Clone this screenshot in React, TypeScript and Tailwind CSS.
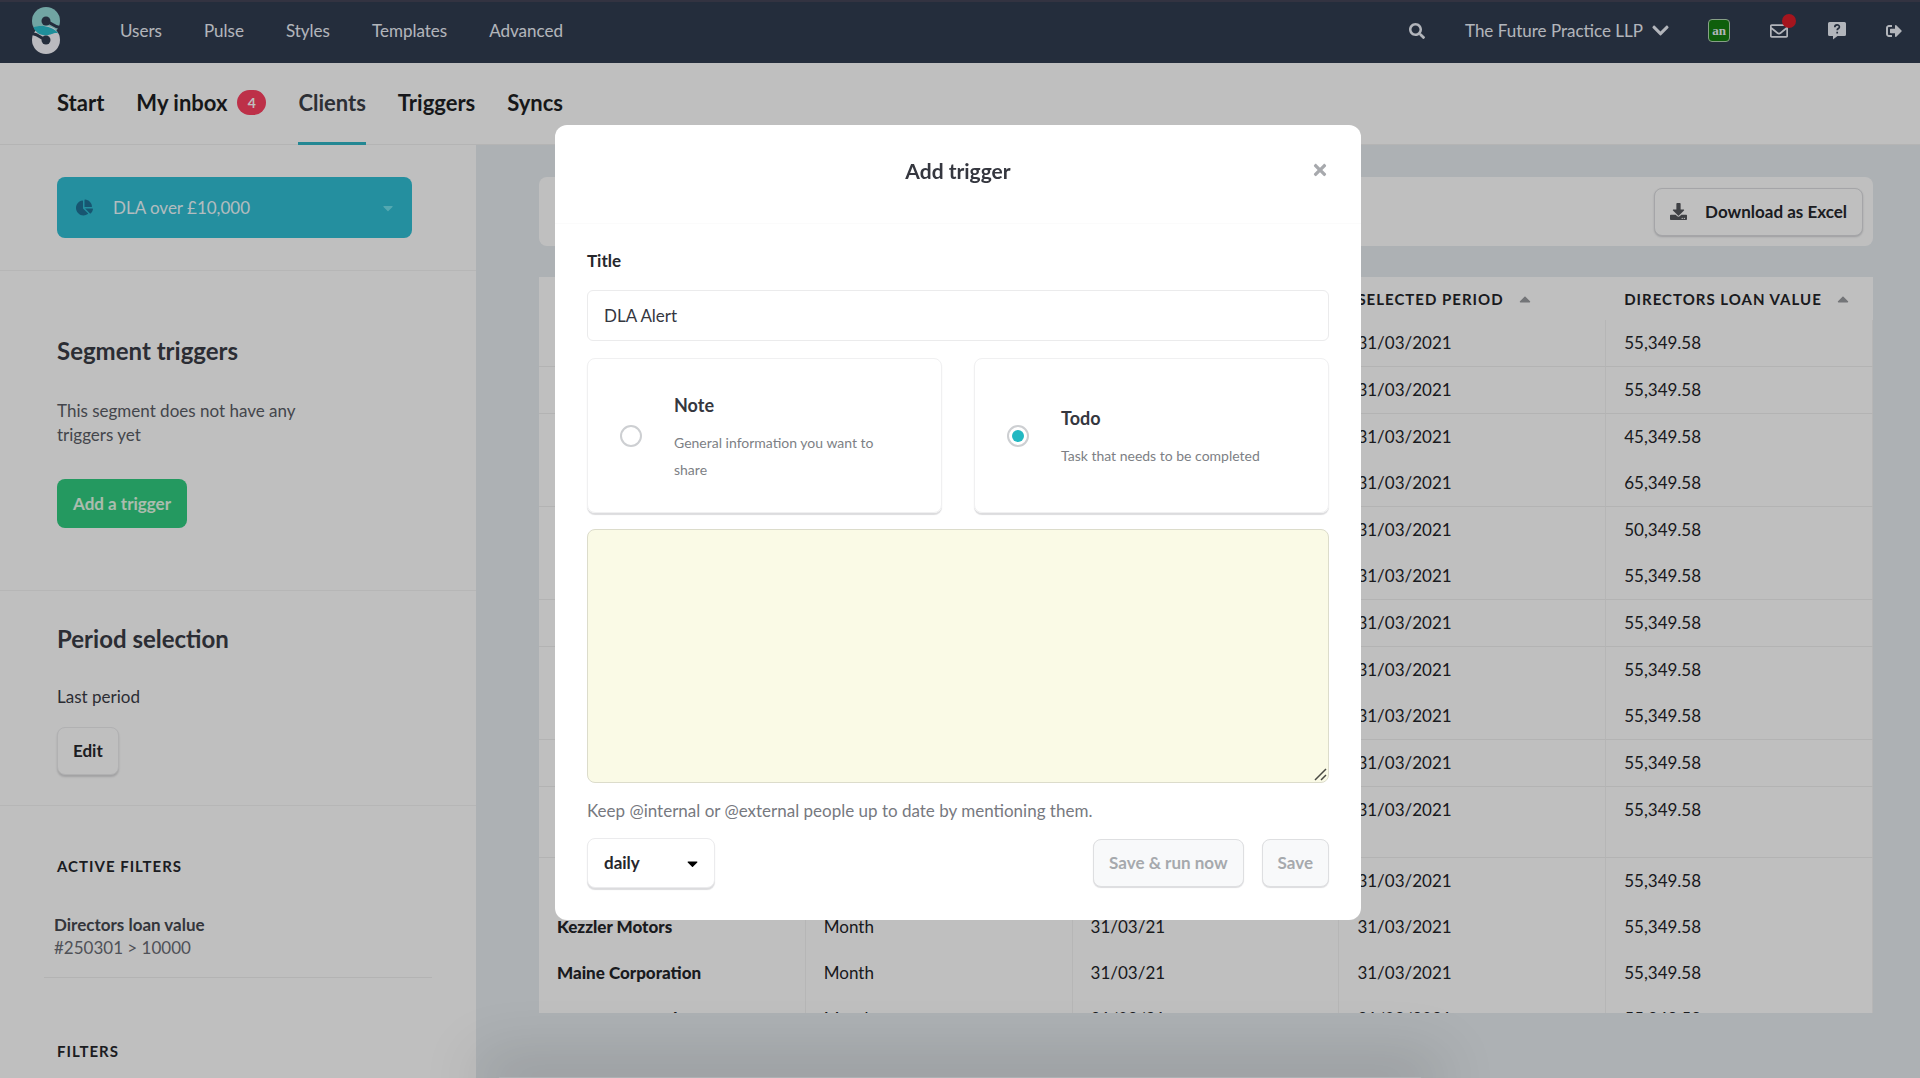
import { FaCaretDown, FaCaretUp, FaChartPie, FaChevronDown, FaDownload, FaRegEnvelope, FaSearch, FaSignOutAlt, FaTimes } from 'react-icons/fa';

const mainNav = ['Users', 'Pulse', 'Styles', 'Templates', 'Advanced'];

type Row = { name?: string; period?: string; date?: string; value: string; line?: boolean; tall?: boolean };

const rows: Row[] = [
  { value: '55,349.58', line: true },
  { value: '55,349.58', line: true },
  { value: '45,349.58' },
  { value: '65,349.58', line: true },
  { value: '50,349.58' },
  { value: '55,349.58', line: true },
  { value: '55,349.58', line: true },
  { value: '55,349.58' },
  { value: '55,349.58', line: true },
  { value: '55,349.58', line: true },
  { value: '55,349.58', line: true, tall: true },
  { value: '55,349.58' },
  { name: 'Kezzler Motors', period: 'Month', date: '31/03/21', value: '55,349.58' },
  { name: 'Maine Corporation', period: 'Month', date: '31/03/21', value: '55,349.58' },
  { name: 'Mercer Fernand', period: 'Month', date: '31/03/21', value: '55,349.58' },
];

const Logo = () => (
  <svg width="28" height="47" viewBox="0 0 28 47" aria-hidden="true">
    <circle cx="14" cy="14" r="14" fill="#97dcda" />
    <circle cx="14" cy="33" r="14" fill="#f8f8ff" />
    <path d="M1.500 20.500C7 18 20 18 26.500 26.500C22 25 20 28 14 28.500C8 28 4 26 1.500 20.500Z" fill="#2abfcf" />
    <path d="M14 14.500C19 15 20 19.500 28.500 20.500M14 32.500C9 32 8 27.500 -.5 26.500" fill="none" stroke="#313c50" strokeWidth="3" />
    <circle cx="14" cy="14" r="4.500" fill="#313c50" />
    <circle cx="14" cy="33" r="4.500" fill="#313c50" />
  </svg>
);

const HelpIcon = () => (
  <svg width="18" height="18" viewBox="0 0 18 18" aria-hidden="true">
    <path d="M1.500 0h15A1.500 1.500 0 0 1 18 1.500v11a1.500 1.500 0 0 1-1.500 1.500H9.500L5 17.500V14H1.500A1.500 1.500 0 0 1 0 12.500v-11A1.500 1.500 0 0 1 1.500 0Z" fill="currentColor" />
    <path d="M6.800 5.200c0-3 4.600-3 4.600-.3 0 1.700-2.200 1.600-2.200 3.300M9.200 9.800v1.700" fill="none" stroke="#313c50" strokeWidth="1.700" />
  </svg>
);

const Header = () => (
  <header className="flex h-[63px] shrink-0 items-center justify-between border-t-2 border-[#454457] bg-[#313c50] pr-[18px] pb-1 pl-8 text-[17px] text-[#eef2fa] shadow-md">
    <div className="flex items-center gap-[60px]">
      <a href="#" aria-label="Home">
        <Logo />
      </a>
      <nav className="flex items-center gap-[42px]">
        {mainNav.map((item) => (
          <a key={item} href="#">{item}</a>
        ))}
      </nav>
    </div>

    <div className="flex items-center">
      <button aria-label="Search" className="mr-10">
        <FaSearch size={16} />
      </button>
      <button className="mr-[38px] flex items-center gap-2">
        The Future Practice LLP
        <FaChevronDown size={19} />
      </button>
      <a href="#" className="mr-10 flex h-[23px] w-[22px] items-center justify-center rounded-sm border border-[#b5d5b5] bg-[#157f10] font-['Liberation_Serif',serif] text-[13px] font-bold">an</a>
      <a href="#" aria-label="Messages" className="relative mr-10">
        <FaRegEnvelope size={18} />
        <span className="absolute -top-2 -right-2 size-3.5 rounded-full bg-[#dd1c28]" />
      </a>
      <a href="#" aria-label="Help" className="mr-10">
        <HelpIcon />
      </a>
      <a href="#" aria-label="Sign out">
        <FaSignOutAlt size={16} />
      </a>
    </div>
  </header>
);

const SubNav = () => (
  <nav className="flex h-[82px] shrink-0 gap-8 border-b border-[#f0f0f0] bg-white pl-[57px] text-[22px] font-bold text-[#1e1f24]">
    <a href="#" className="flex items-center pb-0.5">Start</a>
    <a href="#" className="flex items-center gap-2.5 pb-0.5">
      My inbox
      <span className="flex h-[25px] w-[29px] items-center justify-center rounded-full bg-[#fc4061] text-sm text-white">4</span>
    </a>
    <a href="#" className="relative flex items-center pb-0.5 text-[#3c3f47]">
      Clients
      <span className="absolute inset-x-0 -bottom-px h-[3px] bg-[#2fb4c4]" />
    </a>
    <a href="#" className="flex items-center pb-0.5">Triggers</a>
    <a href="#" className="flex items-center pb-0.5">Syncs</a>
  </nav>
);

const Sidebar = () => (
  <aside className="w-[476px] shrink-0 overflow-hidden bg-white text-[17px] leading-6">
    <section className="border-b border-[#f3f3f3] px-[57px] py-8">
      <button className="flex h-[61px] w-[355px] items-center rounded-lg bg-[#30bfd4] px-4 pl-[19px] text-[#eefbff]">
        <FaChartPie size={17} className="mr-5 text-[#1f7397]" />
        DLA over £10,000
        <FaCaretDown size={16} className="ml-auto text-[#6fe0ec]" />
      </button>
    </section>

    <section className="border-b border-[#f3f3f3] px-[57px] pt-[66px] pb-[62px]">
      <h2 className="text-2xl leading-7 font-bold text-[#3a3c46]">Segment triggers</h2>
      <p className="mt-[34px] w-[260px] text-[#5a5d66]">This segment does not have any triggers yet</p>
      <button className="mt-8 h-[49px] rounded-lg bg-[#30cd80] px-4 font-bold text-[#e4fbe8]">Add a trigger</button>
    </section>

    <section className="border-b border-[#f3f3f3] px-[57px] pt-[34px] pb-[30px]">
      <h2 className="text-2xl leading-7 font-bold text-[#3a3c46]">Period selection</h2>
      <p className="mt-8 text-[#3a3c46]">Last period</p>
      <button className="mt-[18px] h-12 rounded-lg border border-[#ececee] bg-white px-[15px] font-bold text-[#26272c] shadow-[0_2px_2px_#d8d8da]">Edit</button>
    </section>

    <section className="pt-12 pl-[57px]">
      <h3 className="text-[15px] font-bold tracking-[1px] text-[#26272c] uppercase">Active filters</h3>
      <div className="mt-[35px] mr-11 -ml-[13px] border-b border-[#efefef] pb-[18px] pl-[10px] leading-[23px]">
        <p className="font-bold text-[#46484f]">Directors loan value</p>
        <p className="text-[#6a6c74]">#250301 &gt; 10000</p>
      </div>
      <h3 className="mt-[61px] text-[15px] font-bold tracking-[1px] text-[#26272c] uppercase">Filters</h3>
    </section>
  </aside>
);

const SortHeader = ({ label }: { label: string }) => (
  <th className="h-[43px] px-[18px] text-left">
    <button className="flex items-center gap-3 text-[15px] font-bold tracking-[1px] whitespace-nowrap uppercase">
      {label}
      <FaCaretUp size={18} className="text-[#9a9ca0]" />
    </button>
  </th>
);

const ClientTable = () => (
  <div className="mt-[31px] min-h-0 flex-1 overflow-hidden bg-white">
    <table className="w-full table-fixed border-separate border-spacing-0 text-[17px] leading-6 text-[#232429]">
      <thead>
        <tr>
          <th />
          <th />
          <th />
          <SortHeader label="Selected period" />
          <SortHeader label="Directors loan value" />
        </tr>
      </thead>
      <tbody>
        {rows.map((row, i) => {
          const cell = `px-[18px] pt-[11px] align-top border-r border-r-[#f3f3f3] ${row.tall ? 'pb-[35px]' : 'pb-[11px]'} ${row.line ? 'border-b border-b-[#efefef]' : ''}`;
          return (
            <tr key={i}>
              <td className={`${cell} font-black`}>{row.name}</td>
              <td className={cell}>{row.period}</td>
              <td className={cell}>{row.date}</td>
              <td className={cell}>31/03/2021</td>
              <td className={cell}>{row.value}</td>
            </tr>
          );
        })}
      </tbody>
    </table>
  </div>
);

const TypeCard = ({ id, title, text, checked }: { id: string; title: string; text: string; checked?: boolean }) => (
  <label htmlFor={id} className="flex h-[155px] flex-1 items-center rounded-lg border border-[#f0f0f1] px-8 shadow-[0_2px_1px_#dcdcde]">
    <input
      id={id}
      type="radio"
      name="type"
      defaultChecked={checked}
      className="size-[22px] shrink-0 appearance-none rounded-full border-2 border-[#cdcfd2] bg-white p-[3px] checked:bg-[#22b8c2] checked:bg-clip-content"
    />
    <span className="ml-8 pt-1">
      <span className="block text-lg leading-6 font-bold text-[#35373f]">{title}</span>
      <span className="mt-3 block text-sm leading-[27px] text-[#7d7f85]">{text}</span>
    </span>
  </label>
);

const Modal = () => (
  <div className="fixed inset-0 flex items-start justify-center bg-black/25 pt-[125px] pr-1">
    <div role="dialog" aria-labelledby="modal-title" className="w-[806px] rounded-xl bg-white text-[17px] leading-6">
      <div className="relative border-b border-[#fbfbfb] pt-8 pb-[38px]">
        <h1 id="modal-title" className="text-center text-[21px] leading-7 font-bold text-[#35373f]">Add trigger</h1>
        <button aria-label="Close" className="absolute top-9 right-8 text-[#a7a9ad]">
          <FaTimes size={18} />
        </button>
      </div>

      <form className="px-8 pt-[25px] pb-8">
        <label htmlFor="title" className="block font-bold text-[#26272c]">Title</label>
        <input id="title" defaultValue="DLA Alert" className="mt-[17px] h-[51px] w-full rounded-md border border-[#ebebec] px-4 text-[#35373f]" />

        <div className="mt-[17px] flex gap-8">
          <TypeCard id="note" title="Note" text="General information you want to share" />
          <TypeCard id="todo" title="Todo" text="Task that needs to be completed" checked />
        </div>

        <div className="relative mt-4">
          <textarea aria-label="Message" className="block h-[254px] w-full resize-none rounded-lg border border-[#dcdccb] bg-[#fafae6] p-4" />
          <svg width="13" height="13" viewBox="0 0 13 13" className="pointer-events-none absolute right-0.5 bottom-0.5" fill="none" stroke="#4a4a44" strokeWidth="1.500" aria-hidden="true">
            <path d="M1 12 12 1M7 12l5-5" />
          </svg>
        </div>
        <p className="mt-4 text-[#77797f]">Keep @internal or @external people up to date by mentioning them.</p>

        <div className="mt-[15px] flex items-center">
          <div className="relative">
            <select aria-label="Frequency" className="h-[50px] w-32 appearance-none rounded-lg border border-[#ebebed] bg-white pl-4 font-bold text-[#26272c] shadow-[0_2px_1px_#dcdcde]">
              <option>daily</option>
            </select>
            <FaCaretDown size={17} className="pointer-events-none absolute top-[17px] right-[14px]" />
          </div>
          <button type="button" disabled className="ml-auto h-12 rounded-lg border border-[#dedfe1] bg-[#f8f9fa] px-[15px] font-bold text-[#a6a9ad] shadow-[0_1px_1px_#dcdcde]">Save &amp; run now</button>
          <button type="button" disabled className="ml-[18px] h-12 rounded-lg border border-[#dedfe1] bg-[#f8f9fa] px-[15px] font-bold text-[#a6a9ad] shadow-[0_1px_1px_#dcdcde]">Save</button>
        </div>
      </form>
    </div>
  </div>
);

export default function App() {
  return (
    <div className="flex h-screen flex-col overflow-hidden bg-[#e7ecf0] font-[Lato,sans-serif]">
      <Header />
      <SubNav />
      <div className="flex min-h-0 flex-1">
        <Sidebar />
        <main className="flex min-w-0 flex-1 flex-col pt-8 pr-[47px] pb-[65px] pl-[63px]">
          <div className="flex h-[69px] shrink-0 items-center justify-end rounded-lg bg-white px-[10px]">
            <button className="flex h-12 items-center gap-[18px] rounded-lg border border-[#dcdde0] bg-white px-[15px] text-[17px] font-bold text-[#26272c] shadow-[0_1px_2px_#d0d1d4]">
              <FaDownload size={17} className="text-[#55575c]" />
              Download as Excel
            </button>
          </div>
          <ClientTable />
        </main>
      </div>
      <Modal />
      <div className="pointer-events-none fixed inset-x-[26%] bottom-0 h-px shadow-[0_0_60px_20px_rgba(0,0,0,0.15)]" />
    </div>
  );
}
